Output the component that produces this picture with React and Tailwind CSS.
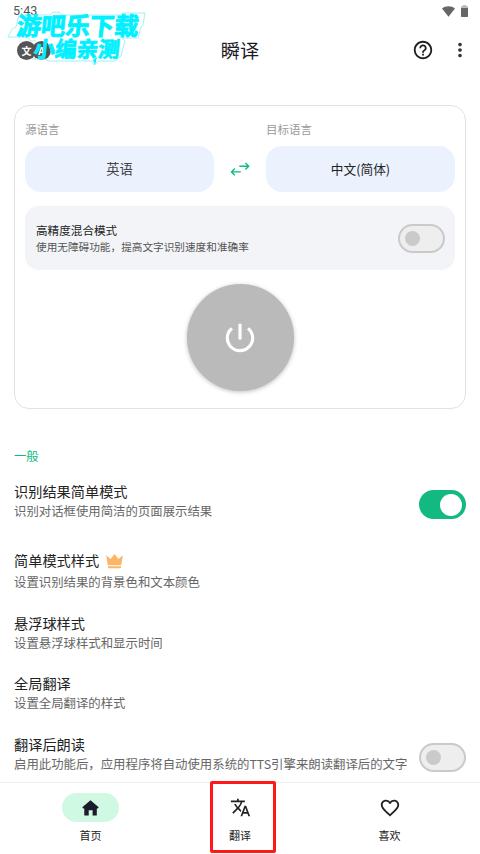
import { useState } from 'react';
import { MdFavoriteBorder, MdHelpOutline, MdMoreVert, MdPowerSettingsNew, MdTranslate } from 'react-icons/md';

const AJUSTES = [
  { id: 'simple', titulo: '识别结果简单模式', detalle: '识别对话框使用简洁的页面展示结果', conSwitch: true, clase: 'h-[69px]' },
  { id: 'estilo', titulo: '简单模式样式', detalle: '设置识别结果的背景色和文本颜色', corona: true, clase: 'h-[63px]' },
  { id: 'bola', titulo: '悬浮球样式', detalle: '设置悬浮球样式和显示时间', clase: 'h-[60px]' },
  { id: 'global', titulo: '全局翻译', detalle: '设置全局翻译的样式', clase: 'h-[61px]' },
  { id: 'lectura', titulo: '翻译后朗读', detalle: '启用此功能后，应用程序将自动使用系统的TTS引擎来朗读翻译后的文字', conSwitch: true, clase: 'h-[46px]' },
];

function Interruptor({ activo, onClick }) {
  const base = 'flex items-center shrink-0 w-[47px] h-[29px] rounded-full';
  return (
    <button
      className={activo ? `${base} justify-end bg-[#12b981] pr-[4px]` : `${base} border-2 border-[#cacaca] bg-[#eeeeee] pl-[5px]`}
      onClick={onClick}
    >
      <span className={activo ? 'w-[22px] h-[22px] rounded-full bg-white' : 'w-[15px] h-[15px] rounded-full bg-[#cacaca]'} />
    </button>
  );
}

function Corona() {
  return (
    <svg className="w-[17px] h-[15px] mt-[2px]" viewBox="0 0 17 15" fill="#fbb564">
      <path d="M.2 1.2 4.6 4.9 8.5 .1l3.9 4.8 4.4-3.7-1.6 10H1.8z" />
      <rect x="1.8" y="12.3" width="13.4" height="2" rx="1" />
    </svg>
  );
}

function IconoInicio() {
  return (
    <svg className="w-[17px] h-[16px]" viewBox="0 0 17 16" fill="#1c1b2b">
      <path d="M8.5.3 16.7 7.2 15.8 8.6H14.8V15.4H10.6V10.2H6.7V15.4H2.3V8.6H1.2L.3 7.2z" />
    </svg>
  );
}

function Marca() {
  return (
    <div className="absolute left-0 top-0 w-[160px] h-[80px]">
      <svg className="absolute inset-0" width="160" height="80" viewBox="0 0 160 80" fill="none" stroke="#a5eef5" strokeWidth="1">
        <path d="M19 15 50 15 53 12H59L62 15 120 15 123 13H145L143 25 141 27 138 38H122L125 41 121 56 115 61H99L94 65 92 61H48L45 59H32M19 15 16 27 12 29 8 37H27L31 41H36" />
        <path fill="#00f0ff" stroke="none" d="M91 55 93 60 97 57 95 65z" />
      </svg>
      <div className="absolute left-[17px] top-[11px] text-[24.4px] leading-[28px] font-bold text-[#00f0ff] whitespace-nowrap -skew-x-6 [-webkit-text-stroke:0.9px_#00f0ff]">
        游吧乐下载
      </div>
      <div className="absolute left-[34px] top-[35px] text-[21.5px] leading-[26px] font-bold text-[#00f0ff] whitespace-nowrap -skew-x-6 [-webkit-text-stroke:0.8px_#00f0ff]">
        小编亲测
      </div>
    </div>
  );
}

function Cabecera() {
  return (
    <header className="relative">
      <div className="h-[22px] pl-[13px] pr-[12px] flex items-center justify-between">
        <span className="text-[12.6px] text-[#555555] font-[Roboto]">5:43</span>
        <div className="flex items-center gap-[6px]">
          <svg className="w-[13px] h-[11px]" viewBox="0 0 13 11" fill="#666666">
            <path d="M0 2.6C3.6-.6 9.4-.6 13 2.6L6.5 10.8z" />
          </svg>
          <svg className="w-[7px] h-[12px]" viewBox="0 0 7 12">
            <path d="M2 0h3v1.2H2z" fill="#bbbbbb" />
            <rect y="1" width="7" height="3" rx=".8" fill="#bbbbbb" />
            <path d="M0 3h7v8.2a.8.8 0 0 1-.8.8H.8a.8.8 0 0 1-.8-.8z" fill="#666666" />
          </svg>
        </div>
      </div>
      <div className="h-[56px] px-[10px] grid grid-cols-3 items-center">
        <div className="flex pl-[7px]">
          <span className="w-[19px] h-[19px] rounded-full bg-[#555555] text-white text-[10px] leading-[19px] text-center font-bold">文</span>
          <span className="w-[19px] h-[19px] -ml-[4px] rounded-full bg-[#555555] text-white text-[10px] leading-[19px] text-center font-bold">A</span>
        </div>
        <h1 className="text-[19.2px] text-center text-[#1c1b1f]">瞬译</h1>
        <div className="flex items-center justify-end gap-[15px]">
          <MdHelpOutline className="w-[22px] h-[22px] text-[#1f1f23]" />
          <MdMoreVert className="w-[22px] h-[22px] -mr-[1px] text-[#35353a]" />
        </div>
      </div>
      <Marca />
    </header>
  );
}

function Idioma({ etiqueta, valor, claseValor }) {
  return (
    <div className="w-[189px]">
      <p className="text-[11.5px] leading-[16px] text-[#999999]">{etiqueta}</p>
      <button className={`mt-[9px] w-full h-[46px] rounded-[16px] bg-[#ebf2fd] ${claseValor}`}>{valor}</button>
    </div>
  );
}

function PanelTraduccion({ preciso, alternarPreciso }) {
  return (
    <section className="mt-[27px] mx-[14px] h-[304px] rounded-[15px] border border-[#e2e2e2] px-[10px] pt-[15px]">
      <div className="flex justify-between items-end">
        <Idioma etiqueta="源语言" valor="英语" claseValor="text-[13.3px] text-[#44444c]" />
        <svg className="w-[20px] h-[16px] mb-[15px]" viewBox="0 0 20 16" fill="none" stroke="#12b981" strokeWidth="1.4">
          <path d="M9.3 5.3H18.6M15.4 2 18.7 5.3 15.4 8.6M10.8 10.9H1.6M4.8 7.6 1.5 10.9 4.8 14.2" />
        </svg>
        <Idioma etiqueta="目标语言" valor="中文(简体)" claseValor="text-[12.7px] text-[#222222]" />
      </div>

      <div className="mt-[14px] h-[64px] rounded-[14px] bg-[#f3f4f8] pl-[11px] pr-[10px] flex items-center justify-between">
        <div>
          <p className="text-[11.6px] leading-[16px] text-[#222222]">高精度混合模式</p>
          <p className="text-[10.65px] leading-[17px] text-[#555555]">使用无障碍功能，提高文字识别速度和准确率</p>
        </div>
        <Interruptor activo={preciso} onClick={alternarPreciso} />
      </div>

      <button className="mt-[14px] mx-auto w-[107px] h-[107px] rounded-full bg-[#bababa] shadow-[0_1px_4px_rgba(0,0,0,0.25)] flex items-center justify-center">
        <MdPowerSettingsNew className="w-[38px] h-[38px] text-white" />
      </button>
    </section>
  );
}

function NavItem({ icono, texto, activo }) {
  return (
    <button className="w-[57px] flex flex-col items-center">
      <span className={`w-[57px] h-[29px] rounded-full flex items-center justify-center ${activo ? 'bg-[#d0f9e3]' : ''}`}>
        {icono}
      </span>
      <span className="mt-[5px] text-[11px] leading-[16px] text-[#222222]">{texto}</span>
    </button>
  );
}

export default function App() {
  const [activos, setActivos] = useState({ simple: true, lectura: false, preciso: false });

  const alternar = (id) => setActivos({ ...activos, [id]: !activos[id] });

  return (
    <div className="w-[480px] h-[854px] overflow-hidden bg-white flex flex-col font-['Noto_Sans_CJK_SC',sans-serif]">
      <Cabecera />
      <PanelTraduccion preciso={activos.preciso} alternarPreciso={() => alternar('preciso')} />

      <main className="pl-[14px] pr-[14px] pt-[39px] h-[373px] shrink-0">
        <h2 className="text-[12.3px] leading-[16px] text-[#12b981]">一般</h2>
        <div className="pt-[17px]">
          {AJUSTES.map((ajuste) => (
            <div key={ajuste.id} className={`flex items-start justify-between ${ajuste.clase}`}>
              <div>
                <div className="flex items-center gap-[7px]">
                  <p className="text-[14.2px] leading-[20px] text-[#222222]">{ajuste.titulo}</p>
                  {ajuste.corona && <Corona />}
                </div>
                <p className={`text-[12.4px] leading-[18px] text-[#666666] whitespace-nowrap ${ajuste.corona ? 'mt-[3px]' : 'mt-px'}`}>{ajuste.detalle}</p>
              </div>
              {ajuste.conSwitch && (
                <div className="mt-[9px]">
                  <Interruptor activo={activos[ajuste.id]} onClick={() => alternar(ajuste.id)} />
                </div>
              )}
            </div>
          ))}
        </div>
      </main>

      <nav className="relative flex-1 border-t border-[#eeeeee] pt-[10px] pl-[62px] pr-[62px] flex items-start justify-between">
        <NavItem activo texto="首页" icono={<IconoInicio />} />
        <NavItem texto="翻译" icono={<MdTranslate className="w-[21px] h-[21px] text-[#222222]" />} />
        <NavItem texto="喜欢" icono={<MdFavoriteBorder className="w-[22px] h-[22px] text-[#222222]" />} />
        {/* marco rojo sobre la pestaña de traducción */}
        <div className="absolute left-[210px] -top-[2px] w-[66px] h-[72px] rounded-[2px] border-[3px] border-[#ff1818] pointer-events-none" />
      </nav>
    </div>
  );
}
